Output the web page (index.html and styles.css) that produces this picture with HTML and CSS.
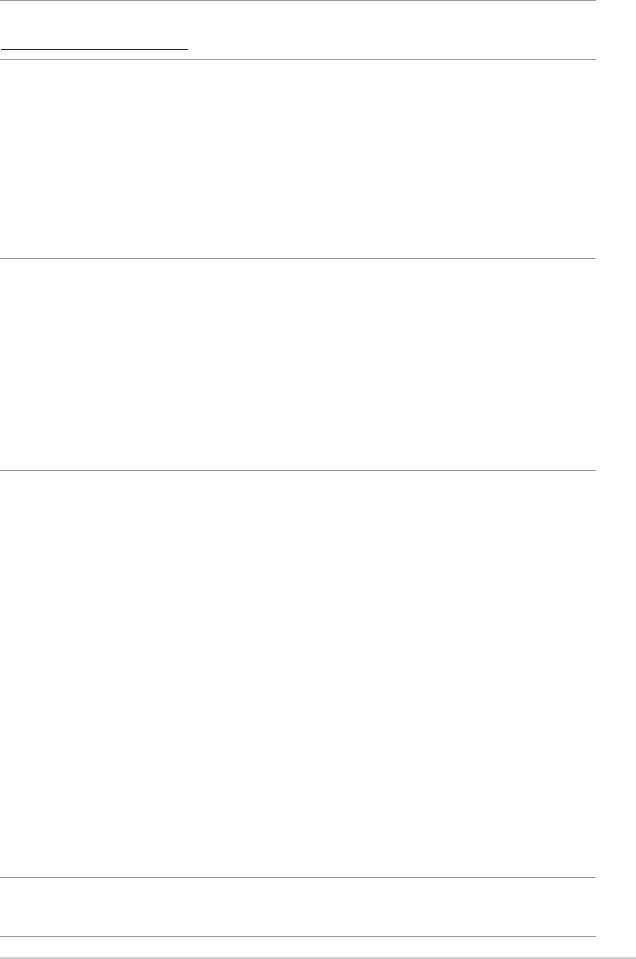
FILE: index.html
```html
<!DOCTYPE html>
<html>
<head>
<meta charset="utf-8">
<link rel="stylesheet" href="styles.css">
</head>
<body>
<div class="page">
  <div class="sec head"><div class="tab-line"></div></div>
  <div class="sec s2"></div>
  <div class="sec s3"></div>
  <div class="sec s4"></div>
  <div class="sec s5"></div>
  <div class="sec s6"></div>
</div>
<div class="bottom-bar"></div>
</body>
</html>
```
FILE: styles.css
```css
html, body { margin: 0; padding: 0; background: #fff; font-family: "Liberation Sans", Arial, sans-serif; }
body { display: flex; flex-direction: column; height: 959px; overflow: hidden; }
.page { width: 596px; display: flex; flex-direction: column; }
.sec { border-top: 1px solid #9a9a9a; }
.head { height: 58px; display: flex; flex-direction: column; }
.tab-line { margin-top: 48px; margin-left: 1px; width: 187px; height: 1px; background: #222; }
.s2 { height: 198px; }
.s3 { height: 211px; }
.s4 { height: 406px; }
.s5 { height: 58px; }
.s6 { height: 20px; }
.bottom-bar { height: 2px; width: 100%; background: #d3d3d3; }
```
